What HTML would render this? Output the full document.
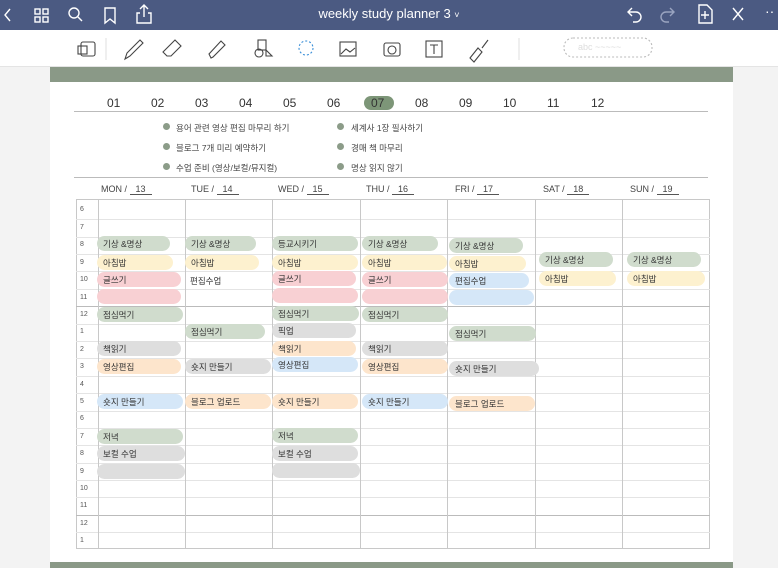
<!DOCTYPE html>
<html><head><meta charset="utf-8"><style>
*{margin:0;padding:0;box-sizing:border-box}
body{width:778px;height:568px;overflow:hidden;background:#f3f3f3;font-family:"Liberation Sans","Noto Sans CJK KR",sans-serif;position:relative}
.hdr{position:absolute;left:0;top:0;width:778px;height:30px;background:#4b5a82;color:#fff}
.hdr .t{position:absolute;left:0;width:778px;top:6px;text-align:center;font-size:13px}
.tb{position:absolute;left:0;top:30px;width:778px;height:37px;background:#fff;border-bottom:1px solid #e4e4e4}
.paper{position:absolute;left:50px;top:67px;width:683px;height:501px;background:#fff}
.band{position:absolute;left:50px;top:67px;width:683px;height:15px;background:#8a9987}
.a{position:absolute}
.mn{font-size:12px;color:#333;top:96px}
.td{font-size:8.5px;color:#444}
.dot{position:absolute;width:7px;height:7px;border-radius:50%;background:#8c9c89}
.dh{position:absolute;top:184px;font-size:9px;color:#444}
.dh u{text-decoration:none;border-bottom:1px solid #555;padding:0 6px}
.hl{position:absolute;left:76px;width:634px;height:1px;background:#e4e4e4}
.vl{position:absolute;top:199px;height:350px;width:1px;background:#c8c8c8}
.rl{position:absolute;left:80px;font-size:7px;color:#555}
.p{position:absolute;height:15px;border-radius:8px;font-size:8.5px;color:#333;padding:2px 0 0 6px;white-space:nowrap}
.g{background:#d0dccd}.y{background:#fdf1cf}.k{background:#f8d0d3}.r{background:#dedede}.o{background:#fde5cc}.b{background:#d5e7f8}
</style></head><body>
<div class="hdr">
<svg class="a" style="left:0;top:0" width="778" height="30" fill="none" stroke="#fff" stroke-width="1.4">
<path d="M10 9l-5 6 5 6"/>
<rect x="35" y="9" width="5" height="5"/><rect x="43" y="9" width="5" height="5"/><rect x="35" y="17" width="5" height="5"/><rect x="43" y="17" width="5" height="5"/>
<circle cx="74" cy="13" r="5"/><path d="M78 17l4 4"/>
<path d="M105 8h10v15l-5-4-5 4z"/>
<path d="M140 13h-3v10h14V13h-3M144 17V6M140 9l4-4 4 4"/>
<path d="M632 8l-4 4 4 4M628 12h8a5 5 0 0 1 0 10h-3"/>
<path d="M670 8l4 4-4 4M674 12h-8a5 5 0 0 0 0 10h3" stroke="#9aa4c0"/>
<path d="M699 5h8l5 5v13h-13zM705 11v8M701 15h8"/>
<path d="M733 8l10 12M743 8l-10 12"/>
</svg>
<div class="t">weekly study planner 3 <span style="font-size:9px">˅</span></div>
<div class="a" style="left:765px;top:3px;font-size:14px;color:#fff">··</div>
</div>
<div class="tb">
<svg class="a" style="left:0;top:0" width="778" height="37" fill="none" stroke="#444" stroke-width="1.1">
<rect x="81" y="12" width="14" height="14" rx="2"/><rect x="78" y="16" width="9" height="8"/>
<line x1="106" y1="8" x2="106" y2="30" stroke="#e2e2e2"/>
<path d="M125 29l2-6 13-13 3 3-13 13z"/>
<path d="M167 26l-4-4 12-12 6 6-10 10z M163 22l4 4"/>
<path d="M211 28l-2-4 12-13 4 4-12 12z"/>
<rect x="258" y="10" width="8" height="10"/><circle cx="259" cy="23" r="4"/><path d="M266 20l6 6h-6z"/>
<circle cx="306" cy="18" r="7" stroke="#3a8fd8" stroke-dasharray="2 2"/>
<rect x="340" y="12" width="16" height="14"/><path d="M341 24l5-5 4 3 5-4"/>
<rect x="384" y="13" width="16" height="13" rx="2"/><circle cx="392" cy="20" r="4"/>
<rect x="426" y="11" width="16" height="16"/><path d="M430 15h8M434 15v9"/>
<path d="M470 28l8-10 4 4-8 10zM482 18l6-8"/>
<line x1="519" y1="8" x2="519" y2="30" stroke="#e2e2e2"/>
<rect x="564" y="8" width="88" height="19" rx="9" stroke="#bbb" stroke-dasharray="2 2"/>
</svg>
<div class="a" style="left:578px;top:12px;font-size:9px;color:#ddd">abc ~~~~~</div>
</div>
<div class="paper"></div>
<div class="band"></div>
<div class="a mn" style="left:107px">01</div><div class="a mn" style="left:151px">02</div><div class="a mn" style="left:195px">03</div><div class="a mn" style="left:239px">04</div><div class="a mn" style="left:283px">05</div><div class="a mn" style="left:327px">06</div>
<div class="a" style="left:364px;top:96px;width:30px;height:14px;border-radius:7px;background:#7d9678"></div>
<div class="a mn" style="left:371px">07</div><div class="a mn" style="left:415px">08</div><div class="a mn" style="left:459px">09</div><div class="a mn" style="left:503px">10</div><div class="a mn" style="left:547px">11</div><div class="a mn" style="left:591px">12</div>
<div class="a" style="left:74px;top:111px;width:634px;height:1px;background:#bbb"></div>
<div class="dot" style="left:163px;top:123px"></div><div class="a td" style="left:176px;top:122px">용어 관련 영상 편집 마무리 하기</div>
<div class="dot" style="left:163px;top:143px"></div><div class="a td" style="left:176px;top:142px">블로그 7개 미리 예약하기</div>
<div class="dot" style="left:163px;top:163px"></div><div class="a td" style="left:176px;top:162px">수업 준비 (영상/보컬/뮤지컬)</div>
<div class="dot" style="left:337px;top:123px"></div><div class="a td" style="left:351px;top:122px">세계사 1장 필사하기</div>
<div class="dot" style="left:337px;top:143px"></div><div class="a td" style="left:351px;top:142px">경매 책 마무리</div>
<div class="dot" style="left:337px;top:163px"></div><div class="a td" style="left:351px;top:162px">명상 읽지 않기</div>
<div class="a" style="left:74px;top:177px;width:634px;height:1px;background:#bbb"></div>
<div class="dh" style="left:101px">MON / <u>13</u></div>
<div class="dh" style="left:191px">TUE / <u>14</u></div>
<div class="dh" style="left:278px">WED / <u>15</u></div>
<div class="dh" style="left:366px">THU / <u>16</u></div>
<div class="dh" style="left:455px">FRI / <u>17</u></div>
<div class="dh" style="left:543px">SAT / <u>18</u></div>
<div class="dh" style="left:630px">SUN / <u>19</u></div>
<div class="a" style="left:76px;top:199px;width:634px;height:350px;border:1px solid #c8c8c8"></div>
<div class="hl" style="top:219px"></div><div class="hl" style="top:237px"></div><div class="hl" style="top:254px"></div><div class="hl" style="top:271px"></div><div class="hl" style="top:289px"></div><div class="hl" style="top:306px;background:#bbb"></div><div class="hl" style="top:324px"></div><div class="hl" style="top:341px"></div><div class="hl" style="top:358px"></div><div class="hl" style="top:376px"></div><div class="hl" style="top:393px"></div><div class="hl" style="top:411px"></div><div class="hl" style="top:428px"></div><div class="hl" style="top:445px"></div><div class="hl" style="top:463px"></div><div class="hl" style="top:480px"></div><div class="hl" style="top:497px"></div><div class="hl" style="top:515px;background:#bbb"></div><div class="hl" style="top:532px"></div>
<div class="vl" style="left:98px"></div><div class="vl" style="left:185px"></div><div class="vl" style="left:272px"></div><div class="vl" style="left:360px"></div><div class="vl" style="left:447px"></div><div class="vl" style="left:535px"></div><div class="vl" style="left:622px"></div>
<div class="rl" style="top:206px">6</div><div class="rl" style="top:224px">7</div><div class="rl" style="top:241px">8</div><div class="rl" style="top:259px">9</div><div class="rl" style="top:276px">10</div><div class="rl" style="top:294px">11</div><div class="rl" style="top:311px">12</div><div class="rl" style="top:328px">1</div><div class="rl" style="top:346px">2</div><div class="rl" style="top:363px">3</div><div class="rl" style="top:381px">4</div><div class="rl" style="top:398px">5</div><div class="rl" style="top:415px">6</div><div class="rl" style="top:433px">7</div><div class="rl" style="top:450px">8</div><div class="rl" style="top:468px">9</div><div class="rl" style="top:485px">10</div><div class="rl" style="top:502px">11</div><div class="rl" style="top:520px">12</div><div class="rl" style="top:537px">1</div>
<!-- MON -->
<div class="p g" style="left:97px;top:236px;width:73px">기상 &amp;명상</div>
<div class="p y" style="left:97px;top:255px;width:76px">아침밥</div>
<div class="p k" style="left:97px;top:272px;width:84px">글쓰기</div>
<div class="p k" style="left:97px;top:289px;width:84px"></div>
<div class="p g" style="left:97px;top:307px;width:86px">점심먹기</div>
<div class="p r" style="left:97px;top:341px;width:84px">책읽기</div>
<div class="p o" style="left:97px;top:359px;width:84px">영상편집</div>
<div class="p b" style="left:97px;top:394px;width:86px">숏지 만들기</div>
<div class="p g" style="left:97px;top:429px;width:86px">저녁</div>
<div class="p r" style="left:97px;top:446px;width:88px">보컬 수업</div>
<div class="p r" style="left:97px;top:464px;width:88px"></div>
<!-- TUE -->
<div class="p g" style="left:185px;top:236px;width:71px">기상 &amp;명상</div>
<div class="p y" style="left:185px;top:255px;width:74px">아침밥</div>
<div class="a" style="left:190px;top:275px;font-size:8.5px;color:#333">편집수업</div>
<div class="p g" style="left:185px;top:324px;width:80px">점심먹기</div>
<div class="p r" style="left:185px;top:359px;width:86px">숏지 만들기</div>
<div class="p o" style="left:185px;top:394px;width:86px">블로그 업로드</div>
<!-- WED -->
<div class="p g" style="left:272px;top:236px;width:86px">등교시키기</div>
<div class="p y" style="left:272px;top:255px;width:86px">아침밥</div>
<div class="p k" style="left:272px;top:271px;width:84px">글쓰기</div>
<div class="p k" style="left:272px;top:288px;width:86px"></div>
<div class="p g" style="left:272px;top:306px;width:87px">점심먹기</div>
<div class="p r" style="left:272px;top:323px;width:84px">픽업</div>
<div class="p o" style="left:272px;top:341px;width:84px">책읽기</div>
<div class="p b" style="left:272px;top:357px;width:86px">영상편집</div>
<div class="p o" style="left:272px;top:394px;width:86px">숏지 만들기</div>
<div class="p g" style="left:272px;top:428px;width:86px">저녁</div>
<div class="p r" style="left:272px;top:446px;width:86px">보컬 수업</div>
<div class="p r" style="left:272px;top:463px;width:88px"></div>
<!-- THU -->
<div class="p g" style="left:362px;top:236px;width:76px">기상 &amp;명상</div>
<div class="p y" style="left:362px;top:255px;width:85px">아침밥</div>
<div class="p k" style="left:362px;top:272px;width:86px">글쓰기</div>
<div class="p k" style="left:362px;top:289px;width:86px"></div>
<div class="p g" style="left:362px;top:307px;width:86px">점심먹기</div>
<div class="p r" style="left:362px;top:341px;width:86px">책읽기</div>
<div class="p o" style="left:362px;top:359px;width:86px">영상편집</div>
<div class="p b" style="left:362px;top:394px;width:86px">숏지 만들기</div>
<!-- FRI -->
<div class="p g" style="left:449px;top:238px;width:74px">기상 &amp;명상</div>
<div class="p y" style="left:449px;top:256px;width:77px">아침밥</div>
<div class="p b" style="left:449px;top:273px;width:80px">편집수업</div>
<div class="p b" style="left:449px;top:290px;width:85px"></div>
<div class="p g" style="left:449px;top:326px;width:87px">점심먹기</div>
<div class="p r" style="left:449px;top:361px;width:90px">숏지 만들기</div>
<div class="p o" style="left:449px;top:396px;width:86px">블로그 업로드</div>
<!-- SAT -->
<div class="p g" style="left:539px;top:252px;width:74px">기상 &amp;명상</div>
<div class="p y" style="left:539px;top:271px;width:77px">아침밥</div>
<!-- SUN -->
<div class="p g" style="left:627px;top:252px;width:74px">기상 &amp;명상</div>
<div class="p y" style="left:627px;top:271px;width:78px">아침밥</div>
<div class="a" style="left:50px;top:562px;width:683px;height:6px;background:#8a9987"></div>
</body></html>
